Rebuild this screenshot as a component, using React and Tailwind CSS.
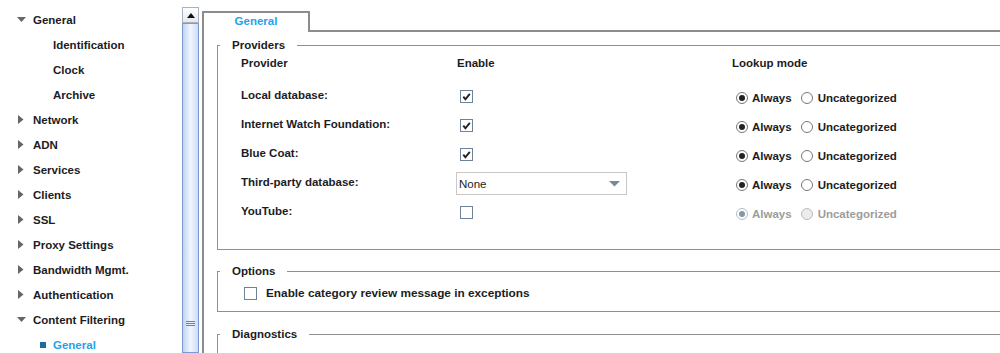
import React from 'react';

const font = { fontFamily: '"Liberation Sans", Arial, sans-serif' };

const RightArrow = () => (
  <svg width="6" height="9" viewBox="0 0 6 9" className="shrink-0">
    <polygon points="0,0 5.5,4.5 0,9" fill="#666" />
  </svg>
);

const DownArrow = () => (
  <svg width="9" height="6" viewBox="0 0 9 6" className="shrink-0">
    <polygon points="0,0 9,0 4.5,5" fill="#666" />
  </svg>
);

const tree = [
  { label: 'General', kind: 'open' },
  { label: 'Identification', kind: 'child' },
  { label: 'Clock', kind: 'child' },
  { label: 'Archive', kind: 'child' },
  { label: 'Network', kind: 'closed' },
  { label: 'ADN', kind: 'closed' },
  { label: 'Services', kind: 'closed' },
  { label: 'Clients', kind: 'closed' },
  { label: 'SSL', kind: 'closed' },
  { label: 'Proxy Settings', kind: 'closed' },
  { label: 'Bandwidth Mgmt.', kind: 'closed' },
  { label: 'Authentication', kind: 'closed' },
  { label: 'Content Filtering', kind: 'open' },
  { label: 'General', kind: 'selected' },
];

const Check = ({ checked }) => (
  <span className="w-[13px] h-[13px] border border-[#6f8398] bg-white flex items-center justify-center">
    {checked && (
      <svg width="9" height="9" viewBox="0 0 9 9">
        <path d="M1.3 4.6 L3.4 7.3 L7.8 1.8" stroke="#222" strokeWidth="1.9" fill="none" />
      </svg>
    )}
  </span>
);

const Radio = ({ on, disabled }) => (
  <span
    className={`w-[12px] h-[12px] rounded-full border flex items-center justify-center shrink-0 ${
      disabled ? (on ? 'border-[#b4bcc6] bg-white' : 'border-[#bcbcbc] bg-[#ececec]') : 'border-[#777] bg-white'
    }`}
  >
    {on && <span className={`w-[6px] h-[6px] rounded-full ${disabled ? 'bg-[#8797a9]' : 'bg-[#222]'}`} />}
  </span>
);

const Lookup = ({ disabled }) => (
  <div className={`flex items-center pl-[4px] pt-[2px] ${disabled ? 'text-[#9c9c9c]' : ''}`}>
    <Radio on disabled={disabled} />
    <span className="ml-[4px]">Always</span>
    <span className="ml-[9px]"><Radio disabled={disabled} /></span>
    <span className="ml-[5px]">Uncategorized</span>
  </div>
);

const providers = [
  { name: 'Local database:', enable: <Check checked /> },
  { name: 'Internet Watch Foundation:', enable: <Check checked /> },
  { name: 'Blue Coat:', enable: <Check checked /> },
  {
    name: 'Third-party database:',
    enable: (
      <div className="w-[171px] h-[23px] border border-[#c8c8c8] flex items-center justify-between pl-[2px] pr-[6px] font-normal -ml-[4px]">
        <span>None</span>
        <svg width="11" height="6" viewBox="0 0 11 6">
          <polygon points="0,0 11,0 5.5,5.5" fill="#7b8895" />
        </svg>
      </div>
    ),
  },
  { name: 'YouTube:', enable: <Check />, disabled: true },
];

export default function App() {
  return (
    <div style={font} className="w-[1000px] h-[353px] bg-white flex overflow-hidden text-[11.5px] font-bold text-[#1c1c24] leading-[14px]">
      {/* tree */}
      <div className="w-[182px] shrink-0 pt-[7px]">
        {tree.map((t, i) => (
          <div key={i} className="h-[25px] flex items-center">
            {t.kind === 'open' && (
              <span className="w-[33px] pl-[17px]"><DownArrow /></span>
            )}
            {t.kind === 'closed' && (
              <span className="w-[33px] pl-[18px]"><RightArrow /></span>
            )}
            {t.kind === 'child' && <span className="w-[53px]" />}
            {t.kind === 'selected' && (
              <span className="w-[53px] pl-[40px]">
                <span className="block w-[6px] h-[6px] bg-[#1b6d9c]" />
              </span>
            )}
            <span className={t.kind === 'selected' ? 'text-[#1ea3eb]' : ''}>{t.label}</span>
          </div>
        ))}
      </div>

      {/* scrollbar */}
      <div className="w-[17px] shrink-0 pt-[7px] flex flex-col">
        <div className="h-[16px] border border-[#a9b3c0] bg-linear-to-b from-white to-[#e3e8ee] flex items-center justify-center">
          <svg width="8" height="5" viewBox="0 0 8 5">
            <polygon points="0,5 8,5 4,0" fill="#111" />
          </svg>
        </div>
        <div className="flex-1 border border-[#7b9ad2] bg-linear-to-r from-[#c0d3f1] via-[#f1f6fe] to-[#cddcf4] flex flex-col justify-end pb-[26px] items-center">
          <div className="flex flex-col gap-[1px] w-[9px]">
            <span className="h-[1px] bg-[#6a80b4]" />
            <span className="h-[1px] bg-[#6a80b4]" />
            <span className="h-[1px] bg-[#6a80b4]" />
          </div>
        </div>
      </div>

      {/* tabbed panel */}
      <div className="flex-1 ml-[3px] flex flex-col min-w-0">
        <div className="flex h-[32px] shrink-0">
          <div className="mt-[11px] w-[108px] h-[21px] border-t-2 border-l-2 border-r-2 border-[#8c8c8c] flex items-center justify-center pb-[3px] text-[#1ea3eb]">
            General
          </div>
          <div className="flex-1 border-b-2 border-[#8c8c8c]" />
        </div>
        <div className="flex-1 border-l-2 border-[#8c8c8c] pl-[13px] pt-[6px] overflow-hidden">
          <div className="mr-[-12px]">
            <fieldset className="border border-[#8f8f8f] px-0">
              <legend className="ml-[2px] px-[12px] leading-[14px]">Providers</legend>
              <div className="pl-[23px] pb-[22px]">
                <div className="grid grid-cols-[215px_276px_1fr] h-[22px] items-center">
                  <span>Provider</span>
                  <span className="pl-[1px]">Enable</span>
                  <span>Lookup mode</span>
                </div>
                <div className="mt-[8px] grid grid-cols-[215px_276px_1fr]">
                  {providers.map((p) => (
                    <React.Fragment key={p.name}>
                      <div className="h-[29px] flex items-center pb-[3px]">{p.name}</div>
                      <div className="h-[29px] flex items-center pl-[4px]">{p.enable}</div>
                      <div className="h-[29px] flex items-center">
                        <Lookup disabled={p.disabled} />
                      </div>
                    </React.Fragment>
                  ))}
                </div>
              </div>
            </fieldset>

            <fieldset className="mt-[14px] border border-[#8f8f8f] px-0">
              <legend className="ml-[2px] px-[12px] leading-[14px]">Options</legend>
              <div className="pl-[26px] pt-[4px] pb-[7px]">
                <div className="h-[22px] flex items-center">
                  <span className="w-[13px] h-[13px] border border-[#6f8398] bg-white" />
                  <span className="ml-[9px] text-[11.8px]">Enable category review message in exceptions</span>
                </div>
              </div>
            </fieldset>

            <fieldset className="mt-[15px] border border-[#8f8f8f] h-[60px] px-0">
              <legend className="ml-[2px] px-[12px] leading-[14px]">Diagnostics</legend>
            </fieldset>
          </div>
        </div>
      </div>
    </div>
  );
}
